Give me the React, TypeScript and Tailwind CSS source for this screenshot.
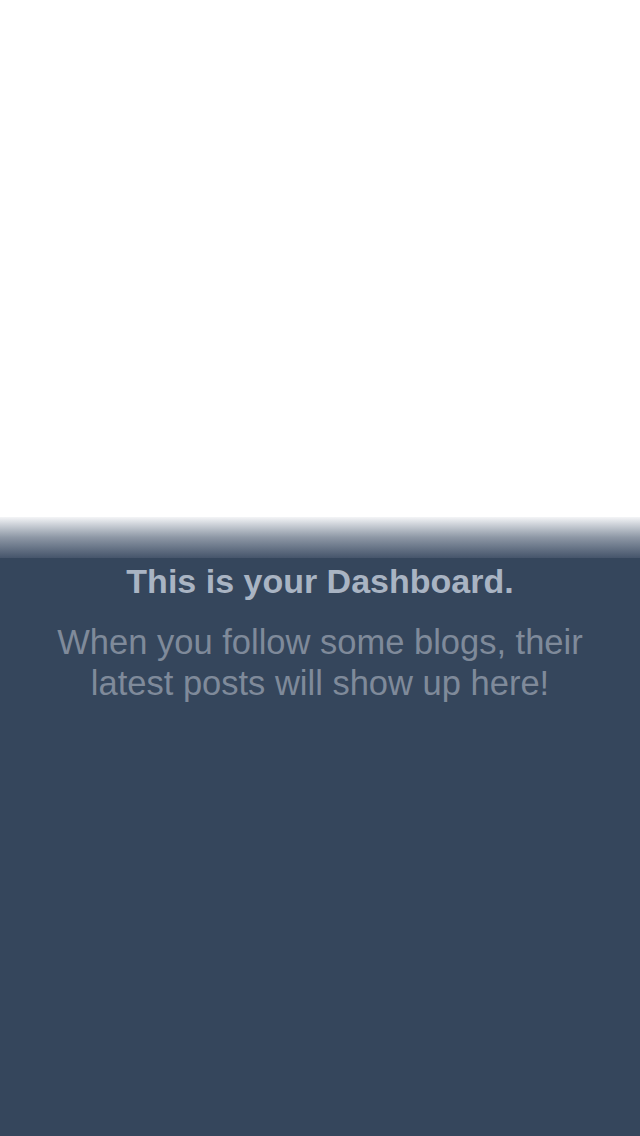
import React from 'react'

export default function App() {
  return (
    <div className="w-[640px] h-[1136px] flex flex-col bg-white font-['Liberation_Sans',Arial,sans-serif]">
      <div className="h-[517px] bg-white" />
      <div className="h-[41px] bg-gradient-to-b from-[#f4f5f7] via-[#8d97a5] to-[#46556b]" />
      <div className="flex-1 bg-[#35465c] flex flex-col items-center text-center pt-[3px]">
        <h1 className="text-[34px] leading-[40px] font-bold text-[#a9b4c3]">
          This is your Dashboard.
        </h1>
        <p className="mt-[21px] w-[560px] text-[34.5px] leading-[41px] text-[#7f8a9a]">
          When you follow some blogs, their latest posts will show up here!
        </p>
      </div>
    </div>
  )
}
